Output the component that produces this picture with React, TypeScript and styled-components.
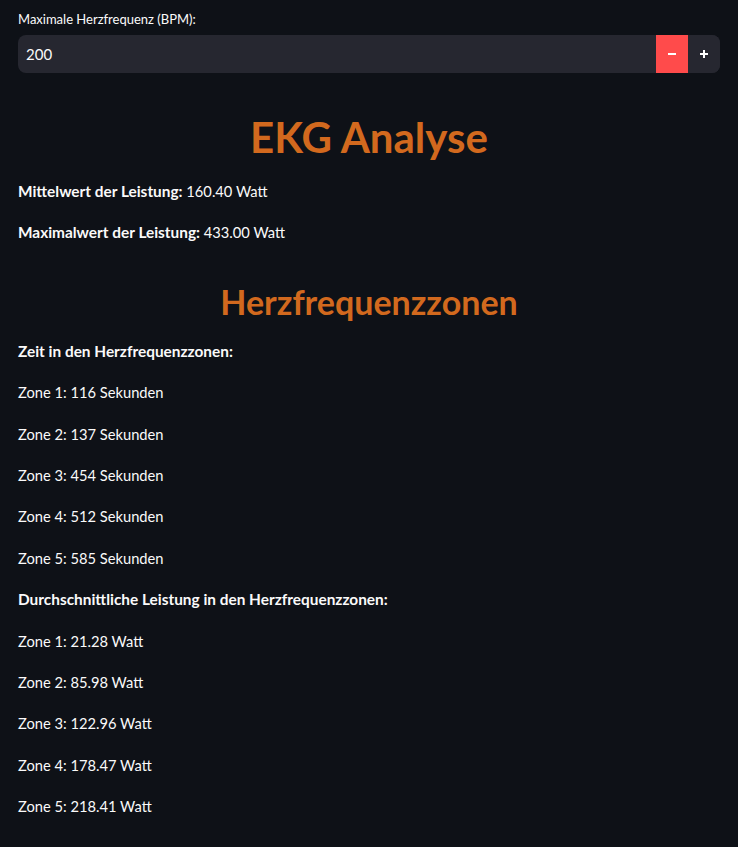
import React from "react";
import styled, { createGlobalStyle } from "styled-components";

const zoneTimes = [116, 137, 454, 512, 585];
const zonePower = ["21.28", "85.98", "122.96", "178.47", "218.41"];

const GlobalStyle = createGlobalStyle`
  html, body {
    margin: 0;
    padding: 0;
    background: #0e1117;
  }
  body {
    font-family: Lato, "Noto Sans", sans-serif;
    color: #fafafa;
  }
`;

const App = () => {
  return (
    <>
      <GlobalStyle />
      <Page>
        <Label>Maximale Herzfrequenz (BPM):</Label>
        <NumberInput>
          <Value>200</Value>
          <StepButton active>
            <Bar />
          </StepButton>
          <StepButton>
            <Bar />
            <Bar vertical />
          </StepButton>
        </NumberInput>

        <Title>EKG Analyse</Title>
        <Text>
          <b>Mittelwert der Leistung:</b> 160.40 Watt
        </Text>
        <Text>
          <b>Maximalwert der Leistung:</b> 433.00 Watt
        </Text>

        <Subtitle>Herzfrequenzzonen</Subtitle>
        <Text>
          <b>Zeit in den Herzfrequenzzonen:</b>
        </Text>
        {zoneTimes.map((t, i) => (
          <Text key={i}>
            Zone {i + 1}: {t} Sekunden
          </Text>
        ))}
        <Text>
          <b>Durchschnittliche Leistung in den Herzfrequenzzonen:</b>
        </Text>
        {zonePower.map((p, i) => (
          <Text key={i}>
            Zone {i + 1}: {p} Watt
          </Text>
        ))}
      </Page>
    </>
  );
};

export default App;

const Page = styled.div`
  display: flex;
  flex-direction: column;
  padding: 8px 18px 0;
`;

const Label = styled.div`
  font-size: 13px;
  line-height: 22px;
  margin-bottom: 5px;
`;

const NumberInput = styled.div`
  display: flex;
  align-items: stretch;
  height: 38px;
  background: #262730;
  border-radius: 8px;
  overflow: hidden;
`;

const Value = styled.div`
  flex: 1;
  display: flex;
  align-items: center;
  padding-left: 8px;
  font-size: 15px;
`;

const StepButton = styled.div<{ active?: boolean }>`
  position: relative;
  width: 32px;
  background: ${(p) => (p.active ? "#ff4b4b" : "#262730")};
`;

const Bar = styled.span<{ vertical?: boolean }>`
  position: absolute;
  left: 50%;
  top: 50%;
  width: ${(p) => (p.vertical ? "2px" : "8px")};
  height: ${(p) => (p.vertical ? "8px" : "2px")};
  transform: translate(-50%, -50%);
  background: #fff;
`;

const Title = styled.h1`
  margin: 38px 0 15px;
  font-size: 42px;
  line-height: 53px;
  font-weight: 700;
  text-align: center;
  color: #d2691e;
`;

const Subtitle = styled.h2`
  margin: 18px 0 16px;
  font-size: 34px;
  line-height: 43px;
  font-weight: 700;
  text-align: center;
  color: #d2691e;
`;

const Text = styled.p`
  margin: 0 0 16px;
  font-size: 14.7px;
  line-height: 25.4px;

  b {
    font-weight: 700;
    font-size: 15.4px;
  }
`;
